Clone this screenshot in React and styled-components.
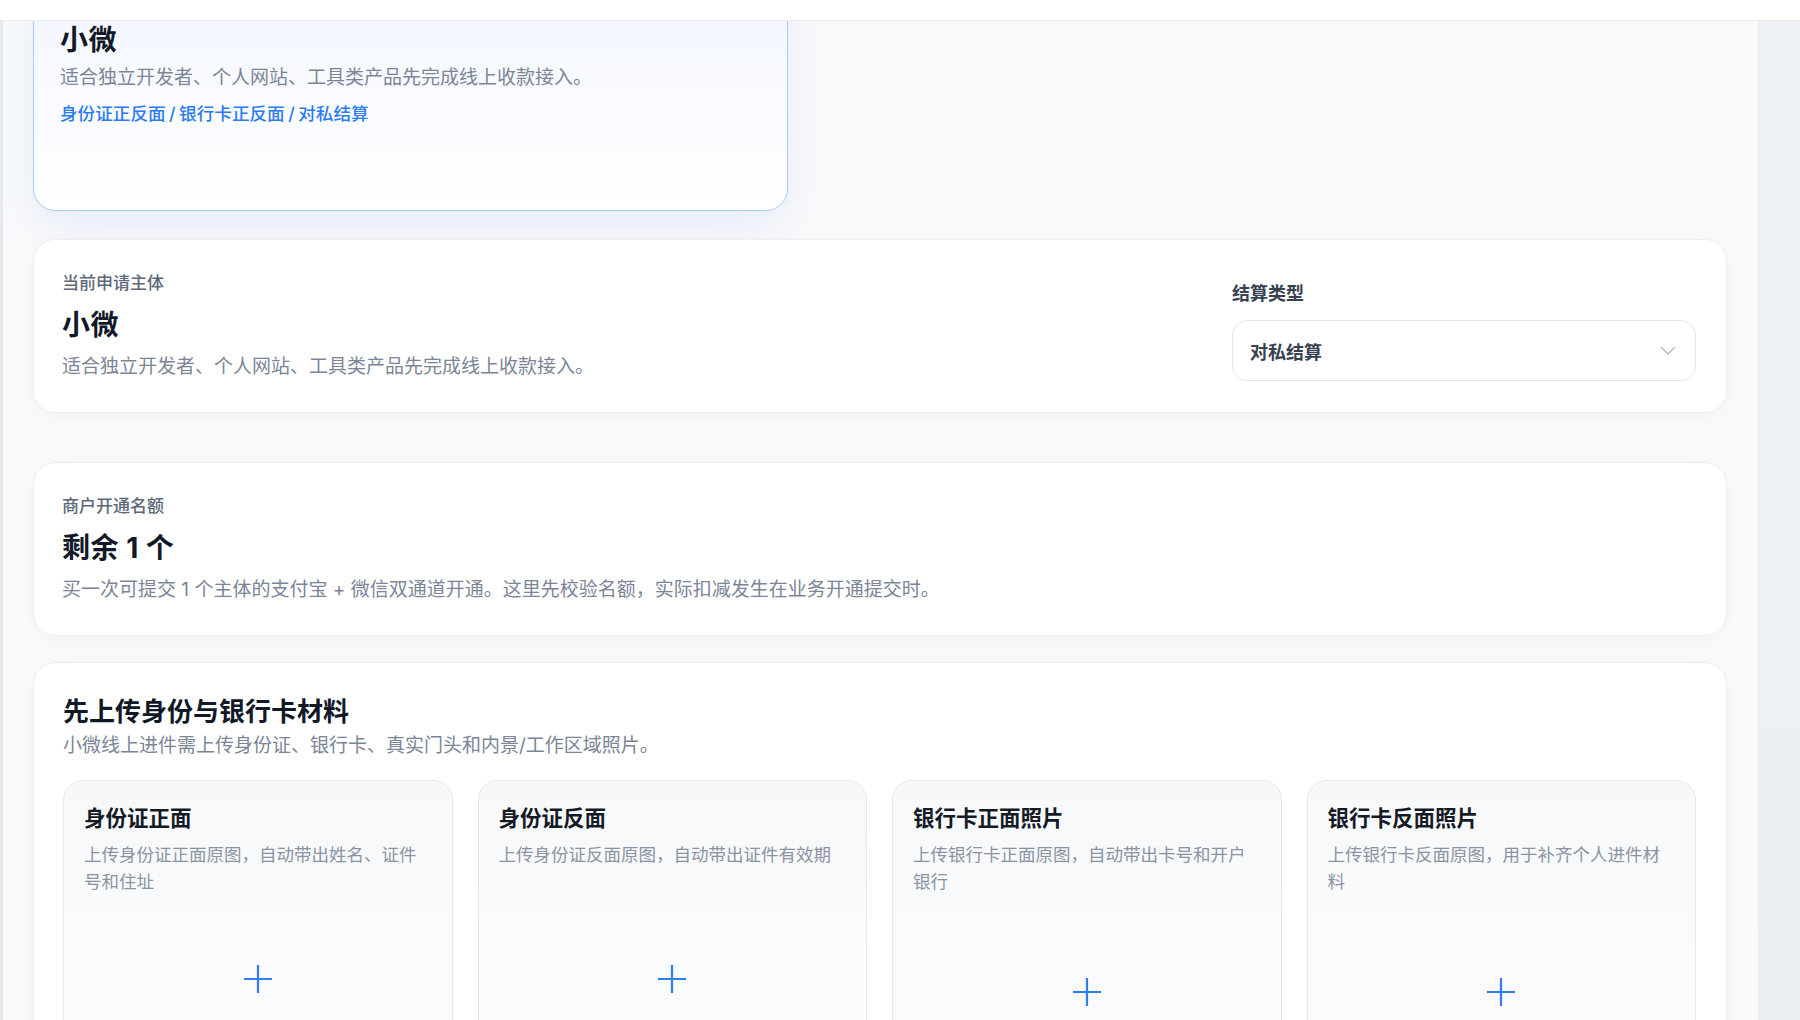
import React from "react";
import styled, { createGlobalStyle } from "styled-components";

const GlobalStyle = createGlobalStyle`
  html, body {
    margin: 0;
    padding: 0;
    background: #eef1f6;
    font-family: "Inter", "Noto Sans CJK SC", "Noto Sans", sans-serif;
    -webkit-font-smoothing: antialiased;
  }
  * { box-sizing: border-box; }
`;

const Screen = styled("div")`
  width: 1800px;
  height: 1020px;
  display: flex;
  flex-direction: column;
  overflow: hidden;
`;

const TopBar = styled("div")`
  height: 21px;
  flex: none;
  background: #ffffff;
  border-bottom: 1px solid #e9eaec;
  position: relative;
  z-index: 2;
`;

const Body = styled("div")`
  flex: 1;
  display: flex;
  min-height: 0;
`;

const Rail = styled("div")`
  flex: none;
  width: ${p => p.width}px;
  background: ${p => p.side === "right"
    ? "linear-gradient(180deg, #eef1f6 0%, #eceff4 100%)"
    : "#e4e9f2"};
  border-left: ${p => (p.side === "right" ? "1px solid #e6e8ec" : "none")};
`;

const Main = styled("main")`
  flex: 1;
  min-width: 0;
  background: #fafafb;
  overflow: hidden;
  padding: 0 31px 0 30px;
`;

const Scroll = styled("div")`
  margin-top: -40px;
  display: flex;
  flex-direction: column;
`;

const OptionCard = styled("div")`
  width: 755px;
  min-height: 230px;
  padding: 40px 24px 24px 26px;
  border: 1px solid #a9c8fb;
  border-radius: 22px;
  background: linear-gradient(180deg, #f1f5ff 0%, #f8faff 45%, #ffffff 100%);
  box-shadow: 0 14px 44px rgba(52, 120, 246, 0.11);
  margin-bottom: 28px;
`;

const Panel = styled("section")`
  background: #ffffff;
  border: 1px solid #eceef1;
  border-radius: 22px;
  box-shadow: 0 4px 16px rgba(15, 23, 42, 0.035);
  padding: ${p => p.pad || "31px 30px 31px 28px"};
  margin-bottom: ${p => p.gap || 0}px;
`;

const Row = styled("div")`
  display: flex;
  justify-content: space-between;
  align-items: flex-start;
`;

const Col = styled("div")`
  display: flex;
  flex-direction: column;
`;

const Label = styled("div")`
  font-size: 17px;
  line-height: 24px;
  font-weight: 500;
  color: #5d6779;
  margin-bottom: 12px;
`;

const Title = styled("div")`
  font-size: 28px;
  line-height: 36px;
  font-weight: 700;
  color: #111827;
  letter-spacing: 0.5px;
`;

const Desc = styled("div")`
  font-size: 19px;
  line-height: 28px;
  color: #7b8597;
  margin-top: ${p => p.top || 0}px;
`;

const LinkLine = styled("div")`
  font-size: 17.6px;
  line-height: 28px;
  font-weight: 500;
  color: #2b7bf3;
  margin-top: 8px;
`;

const Sep = styled("span")`
  margin: 0 3.5px;
`;

const Field = styled("div")`
  width: 464px;
  display: flex;
  flex-direction: column;
  margin-top: 10px;
`;

const FieldLabel = styled("div")`
  font-size: 18px;
  line-height: 26px;
  font-weight: 600;
  color: #374151;
  margin-bottom: 13px;
`;

const Select = styled("div")`
  height: 61px;
  border: 1px solid #e2e4e8;
  border-radius: 15px;
  background: #ffffff;
  padding: 0 19px 0 17px;
  display: flex;
  align-items: center;
  justify-content: space-between;
  font-size: 18px;
  font-weight: 600;
  color: #374151;
`;

const SectionTitle = styled("h2")`
  margin: 0;
  font-size: 26px;
  line-height: 34px;
  font-weight: 700;
  color: #111827;
`;

const Tiles = styled("div")`
  display: grid;
  grid-template-columns: repeat(4, 1fr);
  gap: 25px;
  margin-top: 20px;
`;

const Tile = styled("div")`
  min-height: 300px;
  border: 1px solid #e6e8ec;
  border-radius: 20px;
  background: linear-gradient(180deg, #f7f8fa 0%, #fafbfc 60%, #fbfbfc 100%);
  padding: 23px 20px 22px;
  display: flex;
  flex-direction: column;
`;

const TileTitle = styled("div")`
  font-size: 21.5px;
  line-height: 28px;
  font-weight: 700;
  color: #151b26;
`;

const TileDesc = styled("div")`
  font-size: 17.5px;
  line-height: 27px;
  color: #8a93a3;
  margin-top: 9px;
  min-height: 54px;
  padding-right: 4px;
`;

const Drop = styled("div")`
  display: flex;
  justify-content: center;
  margin-top: ${p => (p.low ? 82 : 69)}px;
`;

const Chevron = () => (
  <svg width="16" height="10" viewBox="0 0 16 10" fill="none">
    <path d="M1.5 1.5L8 8L14.5 1.5" stroke="#b3b7be" strokeWidth="1.3" strokeLinecap="round" strokeLinejoin="round" />
  </svg>
);

const Plus = () => (
  <svg width="30" height="30" viewBox="0 0 30 30" fill="none">
    <path d="M15 1V29M1 15H29" stroke="#2f7cf6" strokeWidth="2.2" />
  </svg>
);

const tiles = [
  { title: "身份证正面", desc: "上传身份证正面原图，自动带出姓名、证件号和住址" },
  { title: "身份证反面", desc: "上传身份证反面原图，自动带出证件有效期" },
  { title: "银行卡正面照片", desc: "上传银行卡正面原图，自动带出卡号和开户银行", low: true },
  { title: "银行卡反面照片", desc: "上传银行卡反面原图，用于补齐个人进件材料", low: true },
];

const needs = ["身份证正反面", "银行卡正反面", "对私结算"];

export default function App() {
  return (
    <>
      <GlobalStyle />
      <Screen>
        <TopBar />
        <Body>
          <Rail width={3} />
          <Main>
            <Scroll>
              <OptionCard>
                <Title>小微</Title>
                <Desc top={6}>适合独立开发者、个人网站、工具类产品先完成线上收款接入。</Desc>
                <LinkLine>
                  {needs.map((n, i) => (
                    <React.Fragment key={n}>
                      {i > 0 && <Sep>/</Sep>}
                      {n}
                    </React.Fragment>
                  ))}
                </LinkLine>
              </OptionCard>

              <Panel gap={49}>
                <Row>
                  <Col>
                    <Label>当前申请主体</Label>
                    <Title>小微</Title>
                    <Desc top={10}>适合独立开发者、个人网站、工具类产品先完成线上收款接入。</Desc>
                  </Col>
                  <Field>
                    <FieldLabel>结算类型</FieldLabel>
                    <Select>
                      <span>对私结算</span>
                      <Chevron />
                    </Select>
                  </Field>
                </Row>
              </Panel>

              <Panel gap={26}>
                <Label>商户开通名额</Label>
                <Title>剩余 1 个</Title>
                <Desc top={10}>买一次可提交 1 个主体的支付宝 + 微信双通道开通。这里先校验名额，实际扣减发生在业务开通提交时。</Desc>
              </Panel>

              <Panel pad="32px 30px 30px 29px">
                <SectionTitle>先上传身份与银行卡材料</SectionTitle>
                <Desc top={3}>小微线上进件需上传身份证、银行卡、真实门头和内景/工作区域照片。</Desc>
                <Tiles>
                  {tiles.map(t => (
                    <Tile key={t.title}>
                      <TileTitle>{t.title}</TileTitle>
                      <TileDesc>{t.desc}</TileDesc>
                      <Drop low={t.low}>
                        <Plus />
                      </Drop>
                    </Tile>
                  ))}
                </Tiles>
              </Panel>
            </Scroll>
          </Main>
          <Rail width={42} side="right" />
        </Body>
      </Screen>
    </>
  );
}
